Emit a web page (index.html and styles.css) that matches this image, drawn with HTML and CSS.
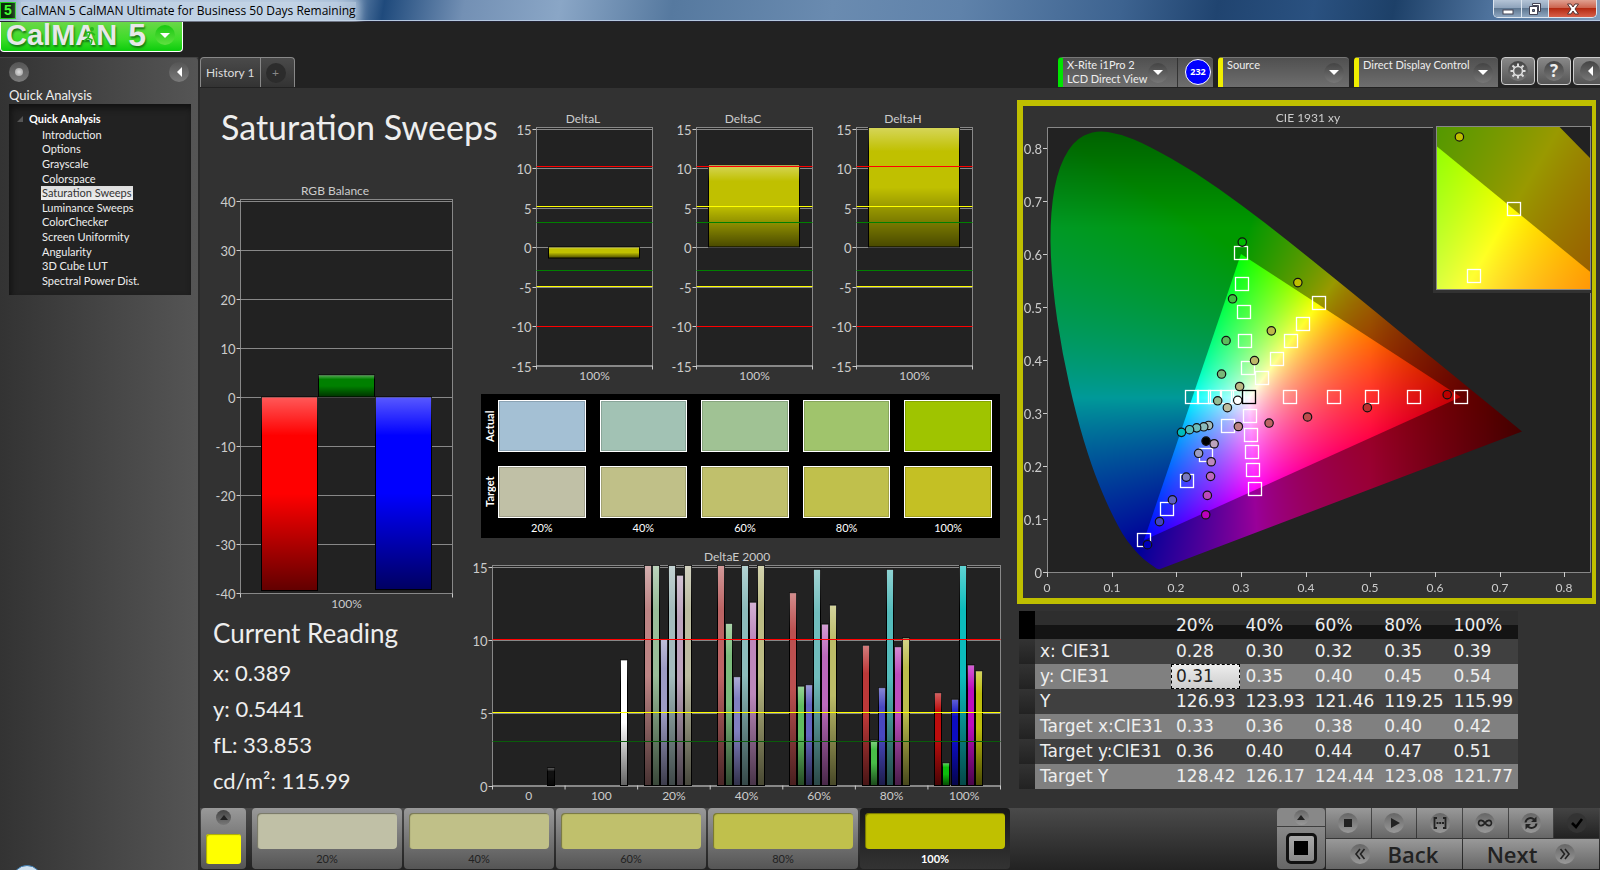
FILE: index.html
```html
<!DOCTYPE html>
<html lang="en">
<head>
    <meta charset="UTF-8">
    <meta name="viewport" content="width=device-width, initial-scale=1.0">
    <title>CalMAN 5</title>
    <link rel="stylesheet" href="styles.css">
</head>
<body>
    <header class="titlebar">
        <span class="app-icon">5</span>
        <span class="window-title">CalMAN 5 CalMAN Ultimate for Business 50 Days Remaining</span>
        <div class="window-buttons">
            <button class="win-btn" aria-label="Minimize"><svg width="12" height="12"><rect x="1" y="7" width="10" height="4" fill="#fff" stroke="#445"/></svg></button>
            <button class="win-btn restore" aria-label="Restore"><svg width="12" height="12"><g fill="#fff" stroke="#445"><path d="M3.500 .5h8v8h-2v-6h-6z"/><path fill-rule="evenodd" d="M.5 3.500h8v8h-8zM3.500 6.500v2h2v-2z"/></g></svg></button>
            <button class="win-btn close" aria-label="Close"><svg width="14" height="12"><path d="M1.500 1h3.500l2 3 2-3h3.500l-3.500 5 3.500 5h-3.500l-2-3-2 3h-3.500l3.500-5z" fill="#fff" stroke="#533"/></svg></button>
        </div>
    </header>

    <div class="topstrip">
        <button class="logo" aria-label="CalMAN 5 menu">
            <span class="logo-name">CalMAN</span>
            <svg class="runner" width="16" height="20" viewBox="0 0 16 20"><circle cx="10" cy="4" r="2" fill="#26b91b"/><path d="M3 8l4-1 3 1 3 2M8 8l-2 5 4 2-1 4M6 13l-4 3" fill="none" stroke="#26b91b" stroke-width="1.600"/></svg>
            <span class="logo-num">5</span>
            <span class="round green"><i class="tri down"></i></span>
        </button>
    </div>

    <div class="app">
        <aside class="sidebar">
            <div class="side-tools">
                <button class="round" aria-label="Record"><i class="dot"></i></button>
                <button class="round" aria-label="Collapse"><i class="tri left"></i></button>
            </div>
            <h2>Quick Analysis</h2>
            <nav class="tree">
                <div class="tree-root">Quick Analysis</div>
                <a href="#">Introduction</a>
                <a href="#">Options</a>
                <a href="#">Grayscale</a>
                <a href="#">Colorspace</a>
                <a href="#" class="selected">Saturation Sweeps</a>
                <a href="#">Luminance Sweeps</a>
                <a href="#">ColorChecker</a>
                <a href="#">Screen Uniformity</a>
                <a href="#">Angularity</a>
                <a href="#">3D Cube LUT</a>
                <a href="#">Spectral Power Dist.</a>
            </nav>
            <div class="orb"></div>
        </aside>

        <div class="main">
            <div class="toolbar">
                <div class="tabs">
                    <button class="tab">History 1</button>
                    <button class="tab add" aria-label="Add tab"><span>+</span></button>
                </div>
                <div class="devices">
                    <div class="device meter">
                        <button class="device-btn"><span>X-Rite i1Pro 2<br>LCD Direct View</span><span class="round"><i class="tri down"></i></span></button>
                        <span class="badge">232</span>
                    </div>
                    <div class="device source">
                        <button class="device-btn"><span>Source</span><span class="round"><i class="tri down"></i></span></button>
                    </div>
                    <div class="device display">
                        <button class="device-btn"><span>Direct Display Control</span><span class="round"><i class="tri down"></i></span></button>
                    </div>
                    <button class="tool" aria-label="Settings"><span class="round"><svg width="16" height="16" viewBox="-8 -8 16 16"><circle r="4.500" fill="none" stroke="#ddd" stroke-width="1.600"/><path d="M0-5v-2.500M0 5v2.500M5 0h2.500M-5 0h-2.500M3.500-3.500l2-2M-3.500-3.500l-2-2M3.500 3.500l2 2M-3.500 3.500l-2 2" stroke="#ddd" stroke-width="2"/></svg></span></button>
                    <button class="tool" aria-label="Help"><span class="round help">?</span></button>
                    <button class="tool" aria-label="Hide toolbar"><span class="round"><i class="tri left"></i></span></button>
                </div>
            </div>

            <div class="workspace">
                <section class="col-left">
                    <h1>Saturation Sweeps</h1>
                    <svg id="rgb" class="chart" viewBox="0 0 270 432"></svg>
                    <div class="reading">
                        <h3>Current Reading</h3>
                        <p>x: 0.389</p>
                        <p>y: 0.5441</p>
                        <p>fL: 33.853</p>
                        <p>cd/m²: 115.99</p>
                    </div>
                </section>

                <section class="col-mid">
                    <div class="deltas">
                        <svg id="deltaL" class="chart" viewBox="0 0 160 286"></svg>
                        <svg id="deltaC" class="chart" viewBox="0 0 160 286"></svg>
                        <svg id="deltaH" class="chart" viewBox="0 0 160 286"></svg>
                    </div>
                    <div class="swatches">
                        <b>Actual</b>
                        <i class="a20"></i><i class="a40"></i><i class="a60"></i><i class="a80"></i><i class="a100"></i>
                        <b>Target</b>
                        <i class="t20"></i><i class="t40"></i><i class="t60"></i><i class="t80"></i><i class="t100"></i>
                        <span></span>
                        <span>20%</span><span>40%</span><span>60%</span><span>80%</span><span>100%</span>
                    </div>
                    <svg id="deltaE" class="chart" viewBox="0 0 540 262"></svg>
                </section>

                <section class="col-right">
                    <div class="cie">
                        <canvas id="gamut" width="569" height="492"></canvas>
                        <svg id="cie" class="chart" viewBox="0 0 569 492"></svg>
                    </div>
                    <table>
                        <thead>
                            <tr><th class="handle"></th><th class="name"></th><th>20%</th><th>40%</th><th>60%</th><th>80%</th><th>100%</th></tr>
                        </thead>
                        <tbody>
                            <tr><td class="handle"></td><td>x: CIE31</td><td>0.28</td><td>0.30</td><td>0.32</td><td>0.35</td><td>0.39</td></tr>
                            <tr><td class="handle"></td><td>y: CIE31</td><td class="focused">0.31</td><td>0.35</td><td>0.40</td><td>0.45</td><td>0.54</td></tr>
                            <tr><td class="handle"></td><td>Y</td><td>126.93</td><td>123.93</td><td>121.46</td><td>119.25</td><td>115.99</td></tr>
                            <tr><td class="handle"></td><td>Target x:CIE31</td><td>0.33</td><td>0.36</td><td>0.38</td><td>0.40</td><td>0.42</td></tr>
                            <tr><td class="handle"></td><td>Target y:CIE31</td><td>0.36</td><td>0.40</td><td>0.44</td><td>0.47</td><td>0.51</td></tr>
                            <tr><td class="handle"></td><td>Target Y</td><td>128.42</td><td>126.17</td><td>124.44</td><td>123.08</td><td>121.77</td></tr>
                        </tbody>
                    </table>
                </section>
            </div>

            <footer class="bottombar">
                <button class="current" aria-label="Current color"><span class="round small"><i class="tri up"></i></span><i class="chip"></i></button>
                <div class="steps">
                    <button class="step"><i class="t20"></i>20%</button>
                    <button class="step"><i class="t40"></i>40%</button>
                    <button class="step"><i class="t60"></i>60%</button>
                    <button class="step"><i class="t80"></i>80%</button>
                    <button class="step active"><i class="s100"></i>100%</button>
                </div>
                <div class="pattern">
                    <button aria-label="Expand"><span class="round small"><i class="tri up"></i></span></button>
                    <button aria-label="Pattern window"><span class="window-pattern"></span></button>
                </div>
                <div class="controls">
                    <button aria-label="Stop"><span class="round"><svg width="20" height="20"><rect x="6" y="6" width="8" height="8"/></svg></span></button>
                    <button aria-label="Read"><span class="round"><svg width="20" height="20"><path d="M7 5l9 5-9 5z"/></svg></span></button>
                    <button aria-label="Read series"><span class="round"><svg width="20" height="20"><path d="M7 5H4.500v10H7M13 5h2.500v10H13" fill="none" stroke="#222" stroke-width="1.800"/><path d="M6.500 9h2v2h-2zM9.200 9h2v2h-2zM12 9h2v2h-2z"/></svg></span></button>
                    <button aria-label="Read continuous"><span class="round"><svg width="20" height="20"><path d="M10 10C8 7 4 6 3.500 10c.5 4 4.500 3 6.500 0s6-4 6.500 0c-.5 4-4.500 3-6.500 0z" fill="none" stroke="#222" stroke-width="1.600"/></svg></span></button>
                    <button aria-label="Repeat"><span class="round"><svg width="20" height="20"><path d="M4.500 9.500A5 5 0 0 1 13 6.500M15.500 10.500A5 5 0 0 1 7 13.500" fill="none" stroke="#222" stroke-width="2"/><path d="M15.500 3.500v5.500h-5.500zM4.500 16.500V11h5.500z"/></svg></span></button>
                    <button class="dark" aria-label="Accept"><span class="round"><svg width="20" height="20"><path d="M5 10l4 4 6-8" fill="none" stroke="#000" stroke-width="2.600"/></svg></span></button>
                    <button class="wide"><span class="round"><svg width="20" height="20"><path d="M10 5l-4 5 4 5M14.500 5l-4 5 4 5" fill="none" stroke="#222" stroke-width="1.600"/></svg></span>Back</button>
                    <button class="wide">Next<span class="round"><svg width="20" height="20"><path d="M5.500 5l4 5-4 5M10 5l4 5-4 5" fill="none" stroke="#222" stroke-width="1.600"/></svg></span></button>
                </div>
            </footer>
        </div>
    </div>
    <script src="charts.js"></script>
</body>
</html>
```
FILE: styles.css
```css
* {
    box-sizing: border-box;
}

body {
    margin: 0;
    min-height: 100vh;
    display: flex;
    flex-direction: column;
    overflow-x: hidden;
    background: #222;
    color: #eee;
    font-family: Lato, "Liberation Sans", sans-serif;
    font-size: 11px;
}

button {
    margin: 0;
    padding: 0;
    border: 0;
    background: none;
    color: inherit;
    font: inherit;
}

h1, h2, h3, p {
    margin: 0;
    font-weight: normal;
}

/* window title */
.titlebar {
    height: 22px;
    display: flex;
    align-items: center;
    border-bottom: 1px solid #223;
    box-shadow: inset 0 -1px #b4c8e0;
    background: linear-gradient(100deg, #8fa9c8 0, #a4bad4 18%, #8aa5c5 21%, #1f4a7c 24%, #7390b4 29%, #8aa6c6 35%, #56799f 42%, #6a8bb0 52%, #5f82aa 60%, #3d6390 70%, #204470 76%, #2a5180 82%, #1d4068 87%, #4e729c 93%, #7f9dbd 100%);
}

.app-icon {
    width: 16px;
    height: 17px;
    background: #0a2a08;
    border: 1px solid #1fd01a;
    color: #4f3;
    font: bold 14px/15px "Liberation Sans", sans-serif;
    text-align: center;
}

.window-title {
    margin-left: 5px;
    color: #000;
    font: 12px/18px "Open Sans", sans-serif;
    background: rgba(215, 228, 242, .6);
    box-shadow: 0 0 8px 4px rgba(215, 228, 242, .6);
}

.window-buttons {
    display: flex;
    align-self: flex-start;
    margin: 0 3px 0 auto;
    height: 18px;
    border: 1px solid #dde6f0;
    border-top: 0;
    border-radius: 0 0 5px 5px;
    overflow: hidden;
}

.win-btn {
    width: 28px;
    display: flex;
    align-items: center;
    justify-content: center;
    background: linear-gradient(#b4c4d6 0, #8fa4bc 45%, #5f7892 50%, #8ea6c0 100%);
    border-right: 1px solid #dde6f0;
}

.win-btn.restore {
    width: 27px;
}

.win-btn.close {
    width: 47px;
    border-right: 0;
    background: linear-gradient(#e0a090 0, #cc6550 45%, #b42a12 50%, #d8604a 100%);
}

/* logo */
.topstrip {
    height: 35px;
    background: #222;
}

.logo {
    position: relative;
    width: 183px;
    height: 30px;
    display: flex;
    align-items: center;
    padding: 0 7px 3px 5px;
    border: solid #fff;
    border-width: 0 1px 1px;
    border-radius: 0 0 4px 4px;
    background: linear-gradient(#6ad848, #3cdc28 60%, #0ccc0c);
    color: #e8e8e8;
    font: bold 29px/26px "Liberation Sans", sans-serif;
    text-shadow: 1px 2px 2px #187a12;
}

.runner {
    position: absolute;
    left: 81px;
    top: 3px;
}

.logo-num {
    margin-left: 11px;
    font-size: 32px;
}

.round {
    width: 20px;
    height: 20px;
    flex: none;
    display: flex;
    align-items: center;
    justify-content: center;
    border-radius: 50%;
    background: linear-gradient(#444, #777);
}

.round.green {
    margin-left: auto;
    background: linear-gradient(#18c810, #60e040);
}

.round.small {
    width: 15px;
    height: 15px;
}

.tri {
    border: 5px solid transparent;
}

.tri.down {
    border-top-color: #fff;
    border-bottom: 0;
}

.tri.left {
    border-right-color: #fff;
    border-left: 0;
}

.tri.up {
    border-width: 5px 4px;
    border-bottom-color: #222;
    border-top: 0;
}

.dot {
    width: 8px;
    height: 8px;
    border-radius: 50%;
    background: radial-gradient(#ddd, #999);
}

.app {
    flex: 1;
    display: flex;
}

/* sidebar */
.sidebar {
    position: relative;
    width: 200px;
    flex: none;
    padding: 4px 9px 0;
    background: linear-gradient(90deg, #333, #555);
    border-right: 2px solid #2a2a2a;
    border-top: 1px solid #444;
    border-top-right-radius: 4px;
    overflow: hidden;
}

.side-tools {
    display: flex;
    justify-content: space-between;
    margin-bottom: 4px;
}

.side-tools .round {
    background: linear-gradient(#555, #7a7a7a);
}

.sidebar h2 {
    font-size: 13px;
    line-height: 18px;
}

.tree {
    height: 191px;
    margin-right: -2px;
    padding: 7px 0 7px 32px;
    display: flex;
    flex-direction: column;
    justify-content: space-between;
    align-items: flex-start;
    background: #222;
    box-shadow: inset 2px 4px 6px #111;
}

.tree a {
    padding: 0 1px;
    color: #eee;
    line-height: 14px;
    text-decoration: none;
}

.tree a.selected {
    background: linear-gradient(#ddd, #eee);
    color: #333;
}

.tree-root {
    display: flex;
    align-items: center;
    margin-left: -24px;
    line-height: 16px;
    font-weight: bold;
    color: #fff;
}

.tree-root::before {
    content: "";
    margin-right: 6px;
    border: 3px solid #555;
    border-top-color: transparent;
    border-left-color: transparent;
}

.orb {
    position: absolute;
    left: 12px;
    bottom: -25px;
    width: 30px;
    height: 30px;
    border-radius: 50%;
    background: #cfe0ee;
    border: 1px solid #3a7ab0;
}

/* toolbar */
.main {
    flex: 1;
    min-width: 0;
    display: flex;
    flex-direction: column;
    background: #323232;
}

.toolbar {
    height: 31px;
    display: flex;
    justify-content: space-between;
    background: #222;
}

.tabs {
    display: flex;
    height: 30px;
    border: 1px solid #888;
    border-bottom: 0;
    border-radius: 4px 4px 0 0;
    background: linear-gradient(#4a4a4a, #333);
}

.tab {
    padding: 0 5px;
    font-size: 12px;
    color: #ddd;
}

.tab.add {
    width: 34px;
    padding-left: 5px;
    border-left: 1px solid #888;
    color: #888;
}

.tab.add span {
    display: block;
    width: 20px;
    border-radius: 50%;
    background: #2c2c2c;
    line-height: 20px;
}

.devices {
    display: flex;
    margin-right: -9px;
}

.device {
    height: 30px;
    display: flex;
    border-left: 5px solid #f0ee00;
    border-top: 1px solid #777;
    border-radius: 4px 4px 0 0;
    background: linear-gradient(#505050, #6e6e6e);
    margin-right: 5px;
}

.device-btn {
    flex: 1;
    display: flex;
    justify-content: space-between;
    align-items: center;
    padding-left: 4px;
    padding-right: 5px;
    line-height: 14px;
    text-align: left;
    white-space: nowrap;
}

.device-btn > span:first-child {
    align-self: flex-start;
}

.meter {
    width: 155px;
    border-left-color: #00e400;
}

.meter .device-btn {
    padding-right: 9px;
    border-right: 1px solid #333;
}

.source {
    width: 131px;
}

.display {
    width: 144px;
    margin-right: 3px;
}

.badge {
    width: 26px;
    height: 26px;
    margin: 1px 2px 0 7px;
    border: 1px solid #fff;
    border-radius: 50%;
    background: #00f;
    color: #fff;
    font: bold 9px/24px "Open Sans", sans-serif;
    text-align: center;
}

.tool {
    width: 34px;
    height: 28px;
    margin-right: 2px;
    display: flex;
    align-items: center;
    justify-content: center;
    border: 1px solid #ccc;
    border-radius: 4px;
    background: linear-gradient(#888, #555);
}

.help {
    font: bold 17px/20px "Open Sans", sans-serif;
}

/* workspace */
.workspace {
    flex: 1;
    display: grid;
    grid-template-columns: minmax(0, 270fr) minmax(0, 540fr) minmax(0, 590fr);
    align-items: start;
}

.chart {
    display: block;
    width: 100%;
    font-size: 12px;
    fill: #ccc;
}

.chart text {
    text-anchor: middle;
}

.chart .axis {
    text-anchor: end;
    font-size: 13px;
}

.col-left h1 {
    padding: 15px 0 0 21px;
    font-size: 34px;
    line-height: 48px;
    margin-bottom: 29px;
    white-space: nowrap;
}

.reading {
    padding-left: 13px;
    font-size: 22px;
    line-height: 36px;
}

.reading h3 {
    font-size: 26px;
    line-height: 43px;
}

.deltas {
    display: grid;
    grid-template-columns: repeat(3, 1fr);
    padding: 17px 30px 0;
}

.swatches {
    display: grid;
    grid-template-columns: 3px repeat(5, 1fr);
    grid-template-rows: 52px 52px 15px;
    gap: 14px;
    margin: 3px 10px 7px 11px;
    padding: 6px 8px 0 0;
    height: 144px;
    background: #000;
    color: #fff;
    text-align: center;
}

.swatches b {
    width: 17px;
    writing-mode: vertical-rl;
    transform: rotate(180deg);
    line-height: 17px;
}

.swatches i {
    border: 1px solid #fff;
    box-shadow: inset 0 0 0 1px rgba(0, 0, 0, .15);
}

.swatches span {
    margin-top: -12px;
    line-height: 15px;
}

.a20 { background: #a4c0d4; }
.a40 { background: #a2c2b4; }
.a60 { background: #a0c294; }
.a80 { background: #a0c46c; }
.a100 { background: #9fc400; }
.t20 { background: #c0c0a6; }
.t40 { background: #c0c088; }
.t60 { background: #c0c06c; }
.t80 { background: #c0c04c; }
.t100 { background: #c4c024; }
.s100 { background: #c0c000; }

.col-right {
    padding: 12px 4px 0 7px;
}

.cie {
    position: relative;
    border: 6px solid #bfbf00;
    border-right-width: 4px;
}

.cie canvas {
    display: block;
    width: 100%;
}

.cie svg {
    position: absolute;
    top: 0;
    left: 0;
}

table {
    width: 499px;
    margin: 7px 0 0 2px;
    border-collapse: collapse;
    table-layout: fixed;
    font: 17px/25px "DejaVu Sans", sans-serif;
}

th, td {
    height: 25px;
    padding: 0 0 0 5px;
    text-align: left;
    font-weight: normal;
    white-space: nowrap;
}

th {
    height: 28px;
    background: linear-gradient(#2e2e2e 50%, #141414 50%);
}

th.name {
    width: 136px;
}

tbody tr {
    background: #404040;
}

tbody tr:nth-child(even) {
    background: #808080;
}

td.handle, th.handle {
    width: 16px;
    padding: 0;
    background: linear-gradient(#333, #222);
}

th.handle {
    background: #000;
}

td.focused {
    background: linear-gradient(#eee, #ccc);
    color: #222;
    outline: 1px dashed #000;
    outline-offset: -1px;
}

/* bottom bar */
.bottombar {
    height: 62px;
    display: flex;
    padding: 0 1px 1px;
    background: linear-gradient(#4a4a4a, #222);
    color: #222;
}

.current {
    width: 45px;
    display: flex;
    flex-direction: column;
    align-items: center;
    justify-content: space-between;
    padding: 2px 0 5px;
    border-radius: 4px;
    background: linear-gradient(#999, #555);
}

.chip {
    width: 35px;
    height: 30px;
    border-radius: 3px;
    background: #ff0;
    box-shadow: inset 1px 1px 1px #aa0;
}

.steps {
    display: flex;
    gap: 2px;
    margin-left: 6px;
}

.step {
    width: 150px;
    display: flex;
    flex-direction: column;
    padding: 5px 5px 0;
    border-radius: 4px;
    background: linear-gradient(#999, #555);
    line-height: 20px;
    text-align: center;
}

.step i {
    height: 36px;
    border-radius: 4px;
    box-shadow: inset 1px 1px 1px rgba(0, 0, 0, .4);
}

.step.active {
    background: linear-gradient(#181818, #333);
    color: #fff;
    font-weight: bold;
}

.pattern {
    width: 48px;
    margin-left: auto;
    display: grid;
    grid-template-rows: 18px 1fr;
    gap: 1px;
}

.pattern button, .controls button {
    display: flex;
    align-items: center;
    justify-content: center;
    background: linear-gradient(#999, #666);
}

.pattern button {
    border-radius: 4px 4px 0 0;
    background: #888;
}

.pattern button + button {
    border-radius: 0 0 4px 4px;
    background: linear-gradient(#888, #666);
}

.pattern .round, .controls .round {
    background: linear-gradient(#666, #999);
}

.window-pattern {
    width: 31px;
    height: 31px;
    border: 3px solid #111;
    border-radius: 5px;
    background: linear-gradient(#000, #000) center / 14px 14px no-repeat, linear-gradient(#aaa, #888);
}

.controls {
    width: 273px;
    margin-left: 1px;
    display: grid;
    grid-template-columns: repeat(6, 1fr);
    grid-template-rows: 30px 30px;
    gap: 1px;
}

.controls svg {
    fill: #222;
}

.controls .dark {
    background: linear-gradient(#444, #222);
}

.controls .dark .round {
    background: #333;
}

.controls .wide {
    grid-column: span 3;
    gap: 18px;
    font: 600 22px/28px "Open Sans", sans-serif;
}
```
FILE: charts.js
```js
const NS = 'http://www.w3.org/2000/svg';

function add(parent, tag, attrs, text) {
    const el = document.createElementNS(NS, tag);
    for (const key in attrs) el.setAttribute(key, attrs[key]);
    if (text !== undefined) el.textContent = text;
    parent.appendChild(el);
    return el;
}

function line(svg, x1, y1, x2, y2, color) {
    add(svg, 'path', { d: `M${x1} ${y1}L${x2} ${y2}`, stroke: color, 'stroke-width': 1 });
}

// o: box [left, top, right, bottom], top value y, zero y, px per unit
function barChart(id, o) {
    const svg = document.getElementById(id);
    const [l, t, r, b] = o.box;
    const defs = add(svg, 'defs', {});
    const grad = add(defs, 'linearGradient', { id: id + 'Shade', x2: 0, y2: 1 });
    [['0', '#fff', .35], ['.2', '#fff', 0], ['.5', '#000', 0], ['1', '#000', .62]].forEach(s => {
        add(grad, 'stop', { offset: s[0], 'stop-color': s[1], 'stop-opacity': s[2] });
    });

    add(svg, 'text', { x: o.titleX, y: t - 5 }, o.title);
    add(svg, 'rect', { x: l, y: t, width: r - l, height: b - t, fill: '#222', stroke: '#888' });
    o.ticks.forEach(v => {
        const y = Math.round(o.zero - v * o.unit) + .5;
        line(svg, l - 4, y, l, y, '#ccc');
        line(svg, l, y, r, y, '#888');
        add(svg, 'text', { class: 'axis', x: l - 5, y: y + 5 }, v);
    });

    o.bars.forEach(bar => {
        const top = Math.max(t, o.zero - Math.max(bar.v, 0) * o.unit);
        const bottom = Math.min(b, o.zero - Math.min(bar.v, 0) * o.unit);
        const box = { x: bar.x, y: top, width: o.barWidth, height: bottom - top };
        add(svg, 'rect', { ...box, fill: bar.color, stroke: '#000' });
        add(svg, 'rect', { ...box, fill: `url(#${id}Shade)` });
    });

    (o.limits || []).forEach(([v, color]) => {
        const y = Math.round(o.limitZero - v * o.limitUnit) + .5;
        line(svg, l, y, r, y, color);
    });

    const step = (r - l) / o.labels.length;
    for (let i = 0; i <= o.labels.length; i++) line(svg, l + step * i, b, l + step * i, b + 4, '#ccc');
    o.labels.forEach((s, i) => add(svg, 'text', { x: l + step * (i + .5), y: b + 14 }, s));
}

barChart('rgb', {
    title: 'RGB Balance', titleX: 135, box: [40.5, 19.5, 252.5, 413.5],
    zero: 217, unit: 4.9, barWidth: 56, ticks: [40, 30, 20, 10, 0, -10, -20, -30, -40],
    labels: ['100%'],
    bars: [
        { x: 61.5, v: -39.5, color: '#f00' },
        { x: 118.5, v: 4.5, color: '#008000' },
        { x: 175.5, v: -39.3, color: '#00f' }
    ]
});

const deltaLimits = [[10, 'red'], [5, 'yellow'], [3, 'green'], [-3, 'green'], [-5, 'yellow'], [-10, 'red']];
[['deltaL', 'DeltaL', -1.4], ['deltaC', 'DeltaC', 10.4], ['deltaH', 'DeltaH', 20]].forEach(d => {
    barChart(d[0], {
        title: d[1], titleX: 83, box: [36.5, 22.5, 152.5, 260.5],
        zero: 142, unit: 7.9, barWidth: 91, ticks: [15, 10, 5, 0, -5, -10, -15],
        labels: ['100%'], bars: [{ x: 48.5, v: d[2], color: '#c0c000' }],
        limits: deltaLimits, limitZero: 141, limitUnit: 8
    });
});

// red, green, blue, cyan, magenta, yellow; 16 runs off the top of the scale
const sweeps = [
    [16, 16, 10, 16, 14.4, 16],
    [16, 11.1, 7.45, 16, 12.55, 16],
    [13.2, 6.8, 6.9, 14.8, 11.05, 12.35],
    [9.6, 3.1, 6.7, 14.8, 9.5, 10.1],
    [6.35, 1.55, 5.9, 16, 8.25, 7.85]
];
const sweepColors = [
    ['#bc8484', '#98bc98', '#9c9cc4', '#a4bcbc', '#bca4bc', '#bcbca0'],
    ['#bc6464', '#7cbc7c', '#8080c0', '#8cbcbc', '#bc88bc', '#bcbc84'],
    ['#bc5050', '#60bc60', '#6464c0', '#70bcbc', '#bc68bc', '#bcbc68'],
    ['#bc3838', '#48bc48', '#4848c0', '#54bcbc', '#bc4cbc', '#bcbc4c'],
    ['#bc0c0c', '#0cbc0c', '#0c0cc0', '#0cbcbc', '#bc0cbc', '#bcbc0c']
];
const eBars = [{ x: 77.5, v: 1.2, color: '#111' }, { x: 150.5, v: 8.6, color: '#fff' }];
sweeps.forEach((row, i) => {
    row.forEach((v, n) => {
        eBars.push({ x: Math.round(174 + i * 72.6 + n * 8.05) + .5, v: v, color: sweepColors[i][n] });
    });
});
barChart('deltaE', {
    title: 'DeltaE 2000', titleX: 267, box: [22.5, 20.5, 530.5, 240.5],
    zero: 240.5, unit: 14.6, barWidth: 7, ticks: [15, 10, 5, 0],
    labels: ['0', '100', '20%', '40%', '60%', '80%', '100%'], bars: eBars,
    limits: [[10, 'red'], [5, 'yellow'], [3, '#0a5c0a']], limitZero: 240, limitUnit: 14.6
});

// ---- CIE 1931 xy ----
const locus = [
    [.1741, .005], [.1714, .0051], [.1689, .0069], [.1644, .0109], [.1566, .0177], [.144, .0297], [.1241, .0578],
    [.1096, .0868], [.0913, .1327], [.0687, .2007], [.0454, .295], [.0235, .4127], [.0082, .5384], [.0039, .6548],
    [.0139, .7502], [.0389, .812], [.0743, .8338], [.1142, .8262], [.1547, .8059], [.2296, .7543], [.3016, .6923],
    [.3731, .6245], [.4441, .5547], [.5125, .4866], [.5752, .4242], [.627, .3725], [.6915, .3083], [.7347, .2653]
];
const triangle = [[.64, .33], [.3, .6], [.15, .06]];

const full = { x: 24, y: 21, w: 543, h: 445, x0: 0, y0: 0, sx: 646.5, sy: 530 };
const inset = { x: 414, y: 21, w: 153, h: 162, x0: .3748, y0: .4592, sx: 1697, sy: 1752 };

function toPx(view, p) {
    return [view.x + (p[0] - view.x0) * view.sx, view.y + view.h - (p[1] - view.y0) * view.sy];
}

function xyColor(x, y, level) {
    const X = x / y, Z = (1 - x - y) / y;
    const rgb = [
        3.2406 * X - 1.5372 - .4986 * Z,
        -.9689 * X + 1.8758 + .0415 * Z,
        .0557 * X - .204 + 1.057 * Z
    ].map(c => Math.max(c, 0));
    const max = Math.max(...rgb);
    return rgb.map(c => 255 * level * Math.pow(c / max, .85));
}

function paint(view, dim) {
    const c = document.createElement('canvas');
    c.width = view.w;
    c.height = view.h;
    const g = c.getContext('2d');
    const img = g.createImageData(view.w, view.h);
    for (let py = 0; py < view.h; py++) {
        for (let px = 0; px < view.w; px++) {
            const x = view.x0 + (px + .5) / view.sx;
            const y = view.y0 + (view.h - py - .5) / view.sy;
            let level = dim ? .6 : 1;
            if (x > .5) level *= 1 - (x - .5) * (dim ? 2.4 : 1.8);
            if (y > .65) level *= 1 - (y - .65) * 2;
            const rgb = xyColor(x, y, level);
            img.data.set([rgb[0], rgb[1], rgb[2], 255], (py * view.w + px) * 4);
        }
    }
    g.putImageData(img, 0, 0);
    return c;
}

function tracePolygon(g, pts) {
    g.beginPath();
    pts.forEach(p => g.lineTo(p[0], p[1]));
    g.closePath();
}

function traceLocus(g, pts) {
    g.beginPath();
    g.moveTo(pts[0][0], pts[0][1]);
    for (let i = 1; i < pts.length - 1; i++) {
        const [a, b] = [pts[i], pts[i + 1]];
        g.quadraticCurveTo(a[0], a[1], (a[0] + b[0]) / 2, (a[1] + b[1]) / 2);
    }
    g.lineTo(...pts[pts.length - 1]);
    g.closePath();
}

function drawGamut(g, view) {
    g.save();
    g.beginPath();
    g.rect(view.x, view.y, view.w, view.h);
    g.clip();
    g.fillStyle = '#222';
    g.fillRect(view.x, view.y, view.w, view.h);
    traceLocus(g, locus.map(p => toPx(view, p)));
    g.clip();
    g.drawImage(paint(view, true), view.x, view.y);
    tracePolygon(g, triangle.map(p => toPx(view, p)));
    g.clip();
    g.drawImage(paint(view, false), view.x, view.y);
    g.restore();
}

const targets = [
    [.3, .602], [.302, .543], [.304, .491], [.307, .436], [.3105, .384],
    [.42, .507], [.3965, .4685], [.3775, .436], [.3565, .4025], [.333, .3665],
    [.2245, .331], [.243, .331], [.26, .331], [.2785, .331], [.296, .331],
    [.3755, .331], [.4445, .331], [.5025, .331], [.567, .331], [.64, .331],
    [.3135, .294], [.316, .258], [.317, .2265], [.319, .192], [.321, .156],
    [.28, .276], [.246, .2215], [.216, .172], [.1855, .1195], [.15, .061]
];
const readings = [
    [.302, .6225, '#00bc00'], [.287, .5155, '#40bc40'], [.277, .4365, '#5cbc5c'], [.27, .3735, '#78b878'], [.264, .323, '#94bc94'],
    [.388, .546, '#bfbf00'], [.347, .455, '#bcb848'], [.321, .399, '#bcb868'], [.298, .35, '#bcb884'], [.279, .31, '#bcbca0'],
    [.25, .2765, '#a4bcbc'], [.2425, .274, '#8cbcbc'], [.2315, .272, '#6cbcbc'], [.2205, .2685, '#50bcbc'], [.208, .2635, '#00bcbc'],
    [.295, .324, '#fff'], [.246, .247, '#000'],
    [.2585, .242, '#bca4bc'], [.254, .208, '#bc88bc'], [.253, .1805, '#bc68bc'], [.248, .1445, '#bc48bc'], [.2455, .108, '#bc00bc'],
    [.2345, .224, '#9c9cc0'], [.2155, .179, '#7c7cc0'], [.194, .136, '#6060c0'], [.174, .095, '#4444c0'], [.1555, .0515, '#0000bc'],
    [.296, .2745, '#bc8484'], [.3435, .281, '#bc6464'], [.403, .2925, '#bc4c4c'], [.4955, .31, '#bc3030'], [.619, .3345, '#bc0000']
];

function square(svg, view, p, color) {
    const [x, y] = toPx(view, p).map(Math.round);
    add(svg, 'rect', { x: x - 6.5, y: y - 6.5, width: 13, height: 13, fill: 'none', stroke: color, 'stroke-width': 1.3 });
}

function dot(svg, view, p) {
    const [x, y] = toPx(view, p);
    add(svg, 'circle', { cx: x, cy: y, r: 4.2, fill: p[2], stroke: '#111', 'stroke-width': 1.2 });
}

const g = document.getElementById('gamut').getContext('2d');
g.fillStyle = '#323232';
g.fillRect(0, 0, 569, 492);
drawGamut(g, full);
g.fillStyle = '#323232';
g.fillRect(410, 19, 159, 168);
drawGamut(g, inset);

const cie = document.getElementById('cie');
add(cie, 'text', { x: 285, y: 16 }, 'CIE 1931 xy');
add(cie, 'path', { d: 'M410 21.5H24.500V466.500H567.500V187', fill: 'none', stroke: '#888' });
add(cie, 'rect', { x: 413.5, y: 20.5, width: 154, height: 163, fill: 'none', stroke: '#888' });
for (let i = 0; i <= 8; i++) {
    const label = i ? '0.' + i : '0';
    const [x] = toPx(full, [i / 10, 0]).map(Math.round);
    const y = Math.round(toPx(full, [0, i / 10])[1]);
    line(cie, x + .5, 466, x + .5, 471, '#ccc');
    add(cie, 'text', { x: x, y: 486 }, label);
    line(cie, 20, y + .5, 24, y + .5, '#ccc');
    add(cie, 'text', { class: 'axis', x: 19, y: y + 6 }, label);
}
targets.forEach(p => square(cie, full, p, '#fff'));
square(cie, full, [.3125, .331], '#000');
readings.forEach(p => dot(cie, full, p));
square(cie, inset, [.42, .505], '#fff');
square(cie, inset, [.3965, .4665], '#fff');
dot(cie, inset, [.388, .546, '#bfbf00']);
```
